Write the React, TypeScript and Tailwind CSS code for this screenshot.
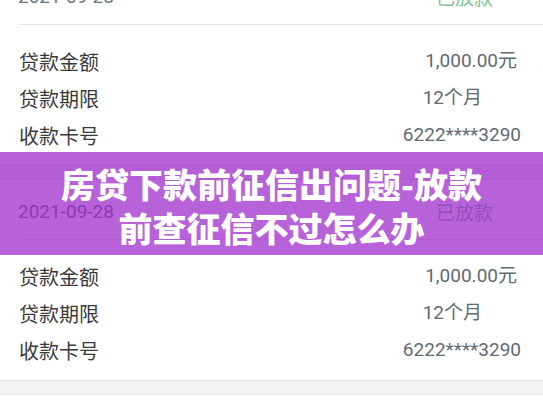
const cjk = '"Noto Sans CJK SC", "Noto Sans", sans-serif';
const num = 'Roboto, "Noto Sans CJK SC", sans-serif';

type Row = { label: string; value: string; pr: string };

const rows: Row[] = [
  { label: "贷款金额", value: "1,000.00元", pr: "pr-[26px]" },
  { label: "贷款期限", value: "12个月", pr: "pr-[61px]" },
  { label: "收款卡号", value: "6222****3290", pr: "pr-[22px]" },
];

const LoanCard = () => (
  <div className="bg-white h-[200px]">
    <div className="ml-[18px] h-[60px] pt-[6px] flex items-center justify-between border-b border-[#e6e6e6]">
      <span className="text-[19px] text-[#6b7580]" style={{ fontFamily: num }}>
        2021-09-28
      </span>
      <span className="text-[19px] text-[#7cc492] pr-[50px]" style={{ fontFamily: cjk }}>
        已放款
      </span>
    </div>
    <div className="pt-[18px]">
      {rows.map((r) => (
        <div key={r.label} className="h-[37px] flex items-center justify-between pl-[19px]">
          <span className="text-[20px] text-[#3a3a3a]" style={{ fontFamily: cjk }}>
            {r.label}
          </span>
          <span className={`text-[19px] text-[#5e6a74] ${r.pr}`} style={{ fontFamily: num }}>
            {r.value}
          </span>
        </div>
      ))}
    </div>
  </div>
);

export default function App() {
  return (
    <div className="relative w-[543px] h-[408px] overflow-hidden bg-[#f2f2f2]">
      <div className="-mt-[35px] flex flex-col">
        <LoanCard />
        <div className="h-[15px] border-y border-[#e4e4e4] bg-[#f2f2f2]" />
        <LoanCard />
        <div className="h-[15px] border-y border-[#e4e4e4] bg-[#f2f2f2]" />
        <div className="bg-white h-[60px]" />
      </div>
      <div className="absolute inset-x-0 top-[152px] h-[103px] bg-[rgba(154,32,202,0.7)] flex items-center justify-center pt-[4px]">
        <h1
          className="text-white text-[34px] font-black leading-[44px] text-center w-[440px]"
          style={{ fontFamily: cjk }}
        >
          房贷下款前征信出问题-放款前查征信不过怎么办
        </h1>
      </div>
    </div>
  );
}
